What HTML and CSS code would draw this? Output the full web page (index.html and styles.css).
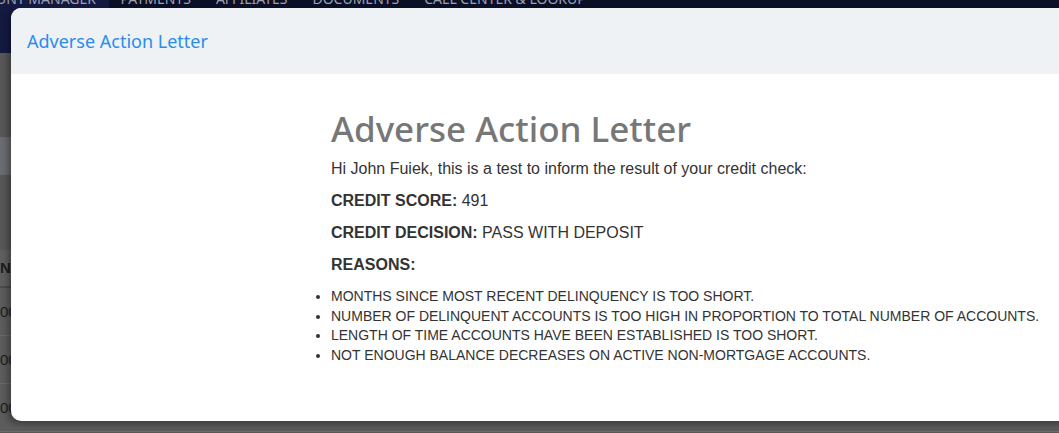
FILE: index.html
```html
<!DOCTYPE html>
<html lang="en">
<head>
    <meta charset="UTF-8">
    <meta name="viewport" content="width=device-width, initial-scale=1.0">
    <title>Adverse Action Letter</title>
    <link rel="stylesheet" href="styles.css">
</head>
<body>
    <!-- page behind the modal (dimmed) -->
    <div class="backdrop">
        <nav class="top-nav">
            <span class="nav-item active">ACCOUNT MANAGER</span>
            <span class="nav-item">PAYMENTS</span>
            <span class="nav-item">AFFILIATES</span>
            <span class="nav-item">DOCUMENTS</span>
            <span class="nav-item">CALL CENTER &amp; LOOKUP</span>
        </nav>
        <div class="page">
            <div class="sub-bar"></div>
            <div class="band"></div>
            <div class="table">
                <div class="th">Na</div>
                <div class="td">00</div>
                <div class="td">00</div>
                <div class="td">00</div>
            </div>
        </div>
    </div>

    <div class="modal">
        <div class="modal-header">
            <h5 class="modal-title">Adverse Action Letter</h5>
        </div>
        <div class="modal-body">
            <h1 class="letter-title">Adverse Action Letter</h1>
            <p class="intro">Hi John Fuiek, this is a test to inform the result of your credit check:</p>
            <p class="line"><strong>CREDIT SCORE:</strong> 491</p>
            <p class="line"><strong>CREDIT DECISION:</strong> PASS WITH DEPOSIT</p>
            <p class="line"><strong>REASONS:</strong></p>
            <ul class="reasons">
                <li>MONTHS SINCE MOST RECENT DELINQUENCY IS TOO SHORT.</li>
                <li>NUMBER OF DELINQUENT ACCOUNTS IS TOO HIGH IN PROPORTION TO TOTAL NUMBER OF ACCOUNTS.</li>
                <li>LENGTH OF TIME ACCOUNTS HAVE BEEN ESTABLISHED IS TOO SHORT.</li>
                <li>NOT ENOUGH BALANCE DECREASES ON ACTIVE NON-MORTGAGE ACCOUNTS.</li>
            </ul>
        </div>
    </div>
</body>
</html>
```

FILE: styles.css
```css
body {
    margin: 0;
    font-family: "Liberation Sans", Arial, sans-serif;
    background: #575757;
    overflow: hidden;
    height: 433px;
}

/* Dimmed page behind */
.backdrop {
    height: 433px;
}

.top-nav {
    display: flex;
    height: 53px;
    background: #0b1027;
    font-family: "Noto Sans", sans-serif;
    font-size: 14px;
    color: #9da1b2;
    line-height: 14px;
}

.nav-item {
    padding: 0 12.5px;
    margin-top: -8px;
    height: 61px;
    white-space: nowrap;
}

.nav-item.active {
    background: #141a40;
    box-sizing: border-box;
    width: 109px;
    padding: 0 13px 0 0;
    display: flex;
    justify-content: flex-end;
    overflow: hidden;
    margin-right: -1px;
}

.sub-bar {
    height: 84px;
    background: #575757;
}

.band {
    height: 38px;
    background: #696c71;
}

.table {
    margin-top: 75px;
    font-size: 15px;
    color: #1c1c1c;
}

.th {
    font-weight: bold;
    height: 36px;
    line-height: 36px;
    border-bottom: 2px solid #4b4b4b;
    background: #5f5f5f;
}

.td {
    height: 47px;
    line-height: 47px;
    border-bottom: 1px solid #6a6a6a;
    background: #5c5c5c;
}

/* Modal */
.modal {
    position: absolute;
    top: 8px;
    left: 11px;
    width: 1100px;
    height: 413px;
    background: #fff;
    border-radius: 10px;
    overflow: hidden;
    box-shadow: -3px 3px 6px rgba(0, 0, 0, 0.35);
}

.modal-header {
    height: 66px;
    background: #eef2f5;
    display: flex;
    align-items: center;
    padding-left: 16px;
}

.modal-title {
    margin: 0;
    font-family: "Noto Sans", sans-serif;
    font-weight: 400;
    font-size: 18px;
    color: #2b8cec;
}

.modal-body {
    padding: 33px 0 0 320px;
    color: #333;
}

.letter-title {
    margin: 0 0 2px 0;
    font-family: "Noto Sans", sans-serif;
    font-weight: 500;
    font-size: 35px;
    line-height: 44px;
    color: #777;
}

.intro,
.line {
    margin: 0;
    font-size: 16px;
    line-height: 32px;
}

.reasons {
    margin: 6px 0 0 0;
    padding: 0;
    font-size: 14px;
    line-height: 19.7px;
    color: #333;
}
```
